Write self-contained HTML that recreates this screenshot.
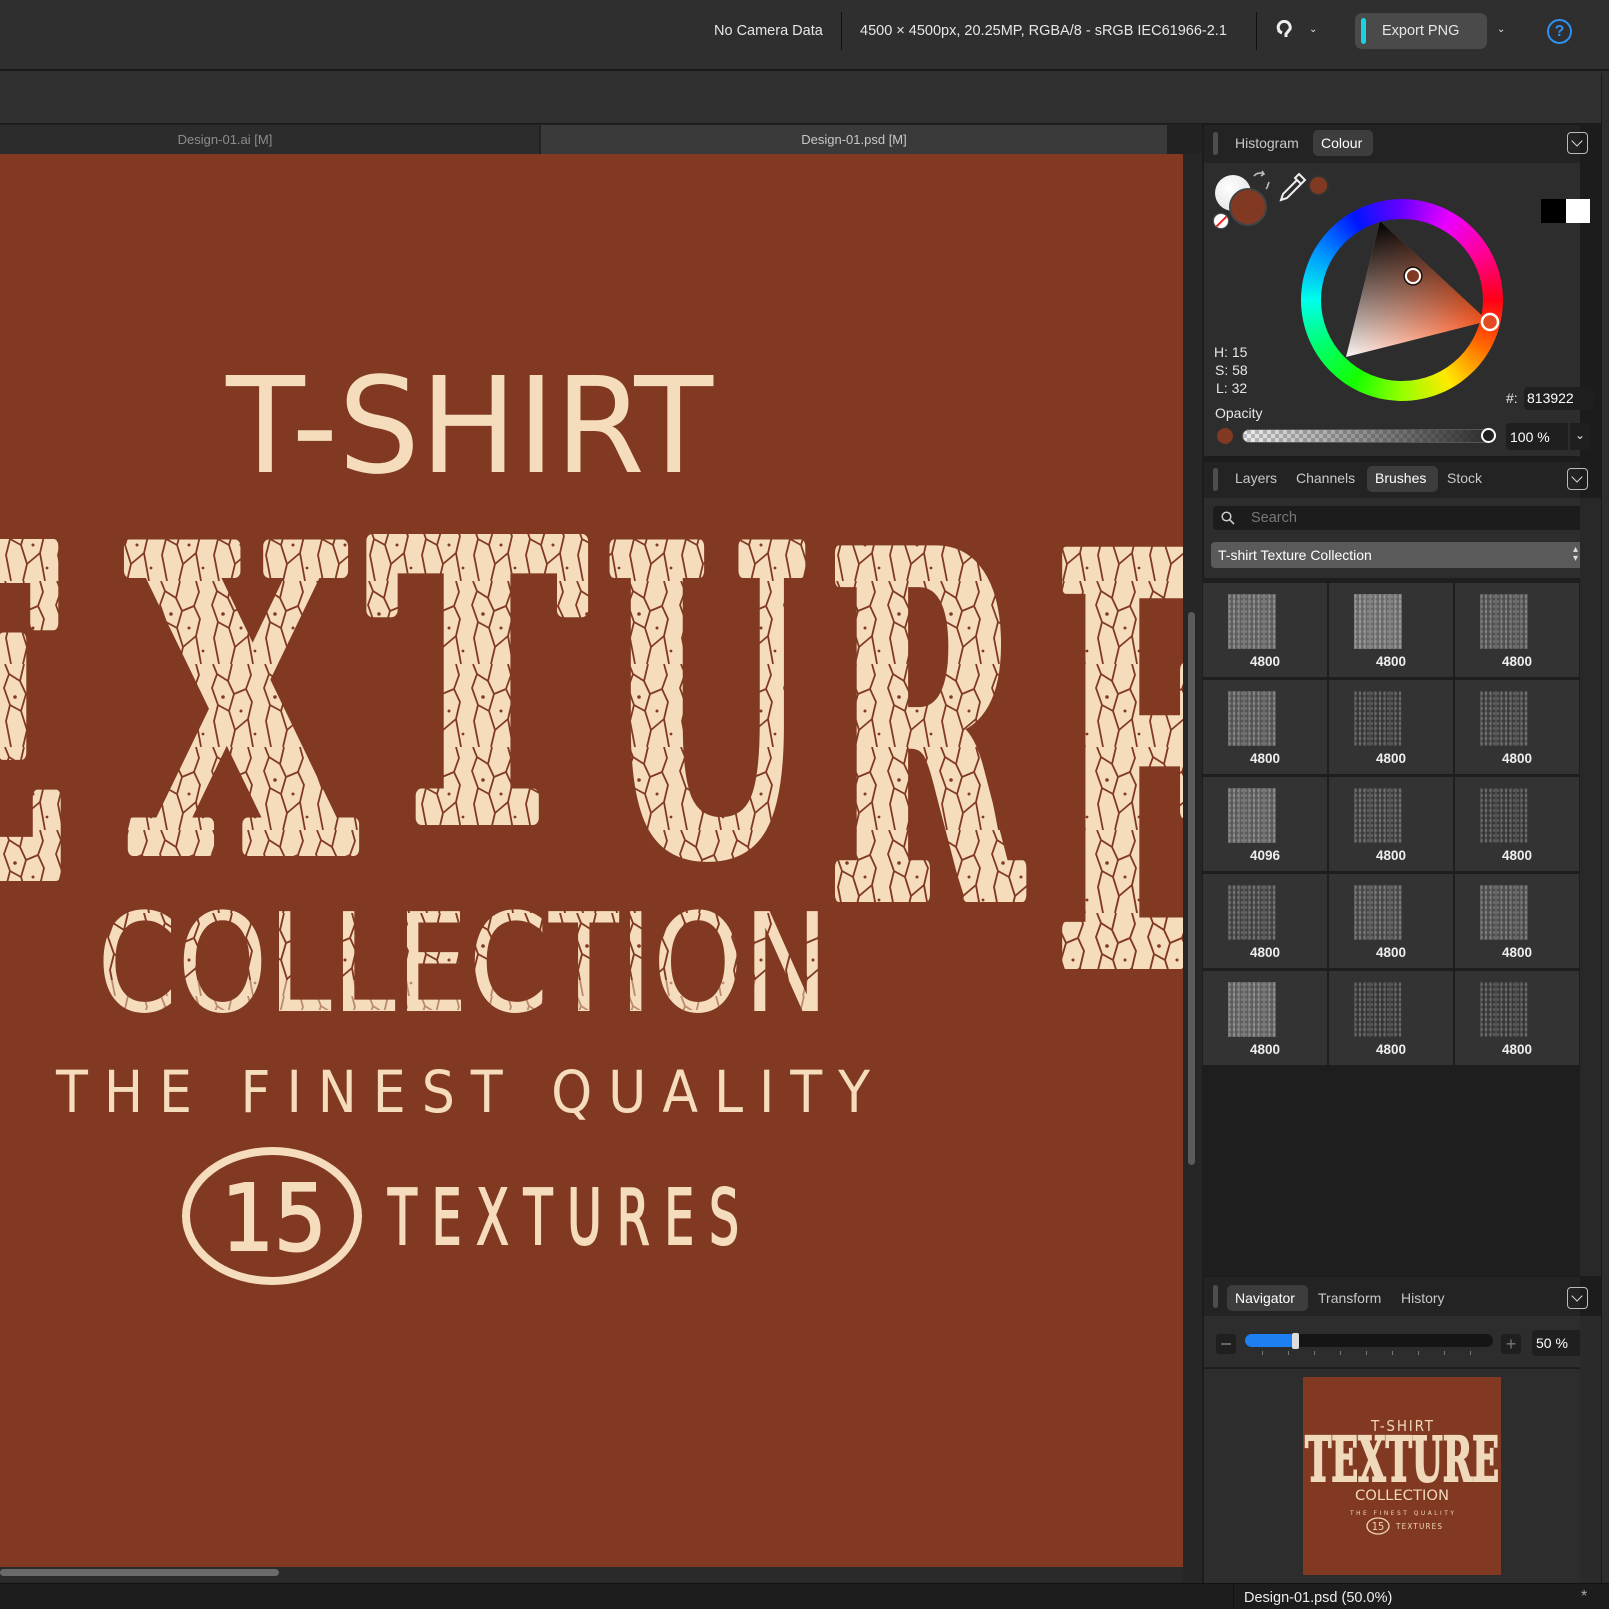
<!DOCTYPE html>
<html><head><meta charset="utf-8"><style>
*{margin:0;padding:0;box-sizing:border-box}
body{width:1609px;height:1609px;overflow:hidden;background:#2f2f2f;font-family:"Liberation Sans",sans-serif;color:#e6e6e6;position:relative}
.a{position:absolute}
.t{position:absolute;white-space:nowrap;font-size:14px;line-height:1}
.dd{position:absolute;width:21px;height:22px;border:1.5px solid #bbb;border-radius:4px}
.dd:after{content:"";position:absolute;left:5px;top:4px;width:7px;height:7px;border-right:1.6px solid #ddd;border-bottom:1.6px solid #ddd;transform:rotate(45deg)}
.grip{position:absolute;width:5px;height:23px;background:#4e4e4e;border-radius:3px}
.cell{position:absolute;width:124px;height:94px;background:#333}
.cell .th{position:absolute;left:25px;top:11px;width:48px;height:55px;background:#6a6a6a;background-image:radial-gradient(rgba(255,255,255,.18) 1px,transparent 1.5px),repeating-linear-gradient(90deg,rgba(255,255,255,.08) 0 2px,rgba(0,0,0,.12) 2px 5px);background-size:4px 5px,auto}
.cell .lb{position:absolute;left:0;width:124px;top:72px;text-align:center;font-size:13.5px;font-weight:bold;color:#eee;line-height:1}
</style></head><body>
<!-- top bar -->
<div class="a" style="left:0;top:0;width:1609px;height:71px;background:#2f2f2f;border-bottom:2px solid #1b1b1b"></div>
<div class="t" style="left:714px;top:24px;font-size:14.5px">No Camera Data</div>
<div class="a" style="left:841px;top:12px;width:1px;height:38px;background:#111"></div>
<div class="t" style="left:860px;top:24px;font-size:14.5px">4500 × 4500px, 20.25MP, RGBA/8 - sRGB IEC61966-2.1</div>
<div class="a" style="left:1256px;top:12px;width:1px;height:38px;background:#111"></div>
<svg class="a" style="left:1274px;top:20px" width="24" height="24" viewBox="0 0 24 24"><path d="M8 13 A6 6 0 1 1 16 9 L12 14 L12 17" fill="none" stroke="#eee" stroke-width="3"/><circle cx="5" cy="11" r="1.5" fill="#eee"/></svg>
<div class="t" style="left:1309px;top:25px;font-size:10px">⌄</div>
<div class="a" style="left:1355px;top:13px;width:132px;height:36px;background:#4a4a4a;border-radius:7px"></div>
<div class="a" style="left:1361px;top:18px;width:5px;height:26px;background:#17d3e6;border-radius:3px"></div>
<div class="t" style="left:1382px;top:24px;font-size:14.5px">Export PNG</div>
<div class="t" style="left:1497px;top:25px;font-size:10px">⌄</div>
<div class="a" style="left:1547px;top:19px;width:25px;height:25px;border:2px solid #2f8ff0;border-radius:50%;color:#2f8ff0;font-size:16px;text-align:center;line-height:21px;font-weight:bold">?</div>
<!-- second bar -->
<div class="a" style="left:0;top:73px;width:1601px;height:51px;background:#303030;border-bottom:1px solid #1a1a1a"></div>
<!-- tabs -->
<div class="a" style="left:0;top:124px;width:1202px;height:30px;background:#222"></div>
<div class="a" style="left:0;top:125px;width:539px;height:29px;background:#2c2c2c"></div>
<div class="t" style="left:0;width:450px;text-align:center;top:133px;font-size:13px;color:#8d8d8d">Design-01.ai [M]</div>
<div class="a" style="left:541px;top:125px;width:626px;height:29px;background:#3a3a3a"></div>
<div class="t" style="left:541px;width:626px;text-align:center;top:133px;font-size:13px;color:#c8c8c8">Design-01.psd [M]</div>
<!-- canvas gutter -->
<div class="a" style="left:1183px;top:154px;width:19px;height:1429px;background:#262626"></div>
<div class="a" style="left:1188px;top:612px;width:7px;height:553px;background:#5b5b5b;border-radius:4px"></div>
<div class="a" style="left:0;top:1567px;width:1183px;height:16px;background:#2a2a2a"></div>
<div class="a" style="left:0;top:1569px;width:279px;height:7px;background:#6a6a6a;border-radius:4px"></div>
<!-- canvas -->
<svg class="a" style="left:0;top:154px" width="1183" height="1413" viewBox="0 154 1183 1413">
<defs>
<pattern id="cr" width="52" height="83" patternUnits="userSpaceOnUse">
<path d="M5 0 L9 10 L4 24 L10 41 L6 57 L11 83 M24 0 L20 17 L26 30 L21 47 L27 66 L23 83 M40 0 L43 11 L38 25 L44 38 L40 55 L45 83 M9 10 L20 17 M26 30 L38 25 M10 41 L21 47 M27 66 L40 55" fill="none" stroke="#813922" stroke-width="1.8"/>
<circle cx="15" cy="33" r="1.8" fill="#813922"/><circle cx="33" cy="47" r="1.5" fill="#813922"/><circle cx="47" cy="70" r="1.4" fill="#813922"/>
</pattern>
</defs>
<rect x="0" y="154" width="1183" height="1413" fill="#813922"/>
<g fill="#f5dcbc" font-family="DejaVu Sans Condensed, DejaVu Sans, sans-serif">
<text x="226" y="472" font-size="133" textLength="487" lengthAdjust="spacingAndGlyphs">T-SHIRT</text>
<text x="97" y="1011" font-size="137" textLength="732" lengthAdjust="spacingAndGlyphs">COLLECTION</text>
<text x="56" y="1112" font-size="58" textLength="814" lengthAdjust="spacing">THE FINEST QUALITY</text>
<text x="388" y="1244" font-size="77" stroke="#f5dcbc" stroke-width="2" textLength="351" lengthAdjust="spacingAndGlyphs">T E X T U R E S</text>
<text x="274" y="1250" font-size="92" stroke="#f5dcbc" stroke-width="2" text-anchor="middle">15</text>
</g>
<ellipse cx="272" cy="1216" rx="86" ry="65" fill="none" stroke="#f5dcbc" stroke-width="8"/>
<g fill="#f5dcbc" stroke="#f5dcbc" stroke-width="14" stroke-linejoin="round" font-family="DejaVu Serif Condensed, DejaVu Serif, serif" font-weight="bold">
<text x="-140" y="874" font-size="450" textLength="210" lengthAdjust="spacingAndGlyphs">E</text>
<text x="128" y="849" font-size="415" textLength="226" lengthAdjust="spacingAndGlyphs">X</text>
<text x="369" y="818" font-size="380" textLength="216" lengthAdjust="spacingAndGlyphs">T</text>
<text x="606" y="849" font-size="415" textLength="200" lengthAdjust="spacingAndGlyphs">U</text>
<text x="828" y="895" font-size="470" textLength="193" lengthAdjust="spacingAndGlyphs">R</text>
<text x="1054" y="962" font-size="560" textLength="190" lengthAdjust="spacingAndGlyphs">E</text>
</g>
<rect x="0" y="530" width="1183" height="450" fill="url(#cr)"/>
<rect x="0" y="880" width="1183" height="130" fill="url(#cr)" opacity=".5"/>
</svg>
<!-- right panel -->
<div class="a" style="left:1202px;top:124px;width:399px;height:1459px;background:#1c1c1c"></div>
<div class="a" style="left:1601px;top:73px;width:8px;height:1510px;background:#2e2e2e;border-left:1px solid #1a1a1a"></div>
<!-- colour header -->
<div class="a" style="left:1204px;top:125px;width:376px;height:38px;background:#232323"></div>
<div class="grip" style="left:1213px;top:132px"></div>
<div class="t" style="left:1235px;top:136px;color:#c8c8c8">Histogram</div>
<div class="a" style="left:1313px;top:130px;width:60px;height:26px;background:#3d3d3d;border-radius:5px"></div>
<div class="t" style="left:1321px;top:136px;color:#fff">Colour</div>
<div class="dd" style="left:1567px;top:132px"></div>
<div class="a" style="left:1204px;top:163px;width:376px;height:293px;background:#2d2d2d"></div>
<!-- colour swatches -->
<div class="a" style="left:1215px;top:175px;width:36px;height:36px;border-radius:50%;background:radial-gradient(circle at 40% 35%,#fff,#ddd)"></div>
<div class="a" style="left:1229px;top:188px;width:38px;height:38px;border-radius:50%;background:#813922;border:2px solid #444"></div>
<div class="a" style="left:1213px;top:213px;width:16px;height:16px;border-radius:50%;background:#fff;border:1px solid #555;overflow:hidden"><div style="position:absolute;left:-2px;top:6px;width:20px;height:2px;background:#e22;transform:rotate(-45deg)"></div></div>
<svg class="a" style="left:1250px;top:170px" width="22" height="22" viewBox="0 0 22 22"><path d="M4 6 A8 8 0 0 1 14 4 M12 1 L14 4 L11 6 M18 14 A8 8 0 0 1 16 19 M19 12 L18 15" fill="none" stroke="#bbb" stroke-width="1.6"/></svg>
<svg class="a" style="left:1277px;top:172px" width="30" height="30" viewBox="0 0 30 30"><path d="M22 2 L28 8 L24 12 L18 6 Z M20 8 L6 22 L4 28 L10 26 L24 12" fill="none" stroke="#eee" stroke-width="2"/></svg>
<div class="a" style="left:1308px;top:175px;width:21px;height:21px;border-radius:50%;background:#813922;border:2px solid #333"></div>
<div class="a" style="left:1541px;top:199px;width:25px;height:24px;background:#000"></div>
<div class="a" style="left:1566px;top:199px;width:24px;height:24px;background:#fff"></div>
<!-- wheel -->
<div class="a" style="left:1301px;top:199px;width:202px;height:202px;border-radius:50%;background:conic-gradient(from 0deg,hsl(265,100%,50%),hsl(295,100%,50%) 30deg,hsl(325,100%,50%) 60deg,hsl(355,100%,50%) 90deg,hsl(25,100%,50%) 120deg,hsl(55,100%,50%) 150deg,hsl(85,100%,50%) 180deg,hsl(115,100%,50%) 210deg,hsl(145,100%,50%) 240deg,hsl(175,100%,50%) 270deg,hsl(205,100%,50%) 300deg,hsl(235,100%,50%) 330deg,hsl(265,100%,50%) 360deg)"></div>
<div class="a" style="left:1321px;top:219px;width:162px;height:162px;border-radius:50%;background:#2d2d2d"></div>
<svg class="a" style="left:1301px;top:199px" width="202" height="202" viewBox="1301 199 202 202">
<defs>
<linearGradient id="g1" x1="1346" y1="357" x2="1488" y2="321" gradientUnits="userSpaceOnUse"><stop offset="0" stop-color="#fff"/><stop offset="1" stop-color="#ea4a14"/></linearGradient>
<linearGradient id="g2" x1="1380" y1="221" x2="1417" y2="339" gradientUnits="userSpaceOnUse"><stop offset="0" stop-color="#000"/><stop offset="1" stop-color="#000" stop-opacity="0"/></linearGradient>
</defs>
<polygon points="1380,221 1488,321 1346,357" fill="url(#g1)"/>
<polygon points="1380,221 1488,321 1346,357" fill="url(#g2)"/>
<circle cx="1413" cy="276" r="7" fill="#813922" stroke="#fff" stroke-width="2"/><circle cx="1413" cy="276" r="9" fill="none" stroke="#000" stroke-width="1"/>
<circle cx="1490" cy="322" r="8" fill="#e44a22" stroke="#fff" stroke-width="2.5"/>
</svg>
<div class="t" style="left:1214px;top:345px">H: 15</div>
<div class="t" style="left:1215px;top:363px">S: 58</div>
<div class="t" style="left:1216px;top:381px">L: 32</div>
<div class="t" style="left:1506px;top:391px">#:</div>
<div class="a" style="left:1524px;top:387px;width:70px;height:23px;background:#1f1f1f;border-radius:4px"></div>
<div class="t" style="left:1527px;top:391px;color:#fff">813922</div>
<div class="t" style="left:1215px;top:406px">Opacity</div>
<div class="a" style="left:1217px;top:428px;width:16px;height:16px;border-radius:50%;background:#813922"></div>
<div class="a" style="left:1242px;top:429px;width:253px;height:14px;border-radius:7px;border:1px solid #555;background:linear-gradient(90deg,rgba(45,45,45,0),#2a2a2a),repeating-conic-gradient(#bbb 0 25%,#eee 0 50%) 0 0/8px 8px"></div>
<div class="a" style="left:1481px;top:428px;width:15px;height:15px;border-radius:50%;border:2.5px solid #fff;background:#1f1f1f"></div>
<div class="a" style="left:1506px;top:423px;width:62px;height:27px;background:#1f1f1f;border-radius:4px 0 0 4px"></div>
<div class="t" style="left:1510px;top:430px;color:#fff">100 %</div>
<div class="a" style="left:1570px;top:423px;width:20px;height:27px;background:#1f1f1f;border-radius:0 4px 4px 0;font-size:12px;text-align:center;line-height:25px">⌄</div>
<!-- brushes header -->
<div class="a" style="left:1204px;top:462px;width:376px;height:36px;background:#232323"></div>
<div class="grip" style="left:1213px;top:468px"></div>
<div class="t" style="left:1235px;top:471px;color:#c8c8c8">Layers</div>
<div class="t" style="left:1296px;top:471px;color:#c8c8c8">Channels</div>
<div class="a" style="left:1367px;top:466px;width:71px;height:26px;background:#3d3d3d;border-radius:5px"></div>
<div class="t" style="left:1375px;top:471px;color:#fff">Brushes</div>
<div class="t" style="left:1447px;top:471px;color:#c8c8c8">Stock</div>
<div class="dd" style="left:1567px;top:468px"></div>
<div class="a" style="left:1204px;top:498px;width:376px;height:80px;background:#2d2d2d"></div>
<div class="a" style="left:1213px;top:506px;width:376px;height:24px;background:#1c1c1c;border-radius:4px"></div>
<svg class="a" style="left:1221px;top:511px" width="14" height="14" viewBox="0 0 14 14"><circle cx="5.5" cy="5.5" r="4.3" fill="none" stroke="#ccc" stroke-width="1.5"/><path d="M8.8 8.8 L13 13" stroke="#ccc" stroke-width="1.6"/></svg>
<div class="t" style="left:1251px;top:511px;color:#777;font-size:14.5px">Search</div>
<div class="a" style="left:1211px;top:542px;width:378px;height:26px;background:#5a5a5a;border-radius:4px"></div>
<div class="t" style="left:1218px;top:548px;color:#fff">T-shirt Texture Collection</div>
<div class="t" style="left:1573px;top:545px;color:#ddd;font-size:10px;line-height:9px">▴<br>▾</div>
<!-- grid -->
<div class="a" style="left:1202px;top:578px;width:378px;height:698px;background:#1e1e1e"></div>
<div class="a" style="left:1580px;top:498px;width:21px;height:778px;background:#282828"></div>
<div class="cell" style="left:1203px;top:583px"><div class="th"></div><div class="lb">4800</div></div>
<div class="cell" style="left:1329px;top:583px"><div class="th" style="background-color:#777"></div><div class="lb">4800</div></div>
<div class="cell" style="left:1455px;top:583px"><div class="th" style="background-color:#5a5a5a"></div><div class="lb">4800</div></div>
<div class="cell" style="left:1203px;top:680px"><div class="th" style="background-color:#5e5e5e"></div><div class="lb">4800</div></div>
<div class="cell" style="left:1329px;top:680px"><div class="th" style="background-color:#3e3e3e"></div><div class="lb">4800</div></div>
<div class="cell" style="left:1455px;top:680px"><div class="th" style="background-color:#444"></div><div class="lb">4800</div></div>
<div class="cell" style="left:1203px;top:777px"><div class="th" style="background-color:#666"></div><div class="lb">4096</div></div>
<div class="cell" style="left:1329px;top:777px"><div class="th" style="background-color:#444"></div><div class="lb">4800</div></div>
<div class="cell" style="left:1455px;top:777px"><div class="th" style="background-color:#3e3e3e"></div><div class="lb">4800</div></div>
<div class="cell" style="left:1203px;top:874px"><div class="th" style="background-color:#4a4a4a"></div><div class="lb">4800</div></div>
<div class="cell" style="left:1329px;top:874px"><div class="th" style="background-color:#505050"></div><div class="lb">4800</div></div>
<div class="cell" style="left:1455px;top:874px"><div class="th" style="background-color:#555"></div><div class="lb">4800</div></div>
<div class="cell" style="left:1203px;top:971px"><div class="th" style="background-color:#6a6a6a"></div><div class="lb">4800</div></div>
<div class="cell" style="left:1329px;top:971px"><div class="th" style="background-color:#3c3c3c"></div><div class="lb">4800</div></div>
<div class="cell" style="left:1455px;top:971px"><div class="th" style="background-color:#3e3e3e"></div><div class="lb">4800</div></div>
<!-- navigator -->
<div class="a" style="left:1204px;top:1277px;width:376px;height:39px;background:#232323"></div>
<div class="grip" style="left:1213px;top:1285px"></div>
<div class="a" style="left:1227px;top:1285px;width:81px;height:26px;background:#3d3d3d;border-radius:5px"></div>
<div class="t" style="left:1235px;top:1291px;color:#fff">Navigator</div>
<div class="t" style="left:1318px;top:1291px;color:#c8c8c8">Transform</div>
<div class="t" style="left:1401px;top:1291px;color:#c8c8c8">History</div>
<div class="dd" style="left:1567px;top:1287px"></div>
<div class="a" style="left:1204px;top:1316px;width:376px;height:52px;background:#2d2d2d;border-bottom:1px solid #1f1f1f"></div>
<div class="a" style="left:1216px;top:1334px;width:20px;height:20px;background:#1f1f1f;border-radius:3px"><div style="position:absolute;left:5px;top:9px;width:10px;height:1.5px;background:#666"></div></div>
<div class="a" style="left:1245px;top:1334px;width:248px;height:13px;background:#151515;border-radius:7px"></div>
<div class="a" style="left:1245px;top:1334px;width:50px;height:13px;background:#1d7ff0;border-radius:7px 0 0 7px"></div>
<div class="a" style="left:1292px;top:1333px;width:7px;height:16px;background:#ddd;border-radius:2px"></div>
<div class="a" style="left:1262px;top:1351px;width:210px;height:4px;background:repeating-linear-gradient(90deg,#777 0 1px,transparent 1px 26px)"></div>
<div class="a" style="left:1501px;top:1334px;width:20px;height:20px;background:#1f1f1f;border-radius:3px;color:#777;font-size:18px;text-align:center;line-height:20px">+</div>
<div class="a" style="left:1532px;top:1330px;width:58px;height:26px;background:#1f1f1f;border-radius:4px"></div>
<div class="t" style="left:1536px;top:1336px;color:#fff">50 %</div>
<div class="a" style="left:1204px;top:1369px;width:376px;height:214px;background:#2d2d2d"></div>
<div class="a" style="left:1580px;top:1316px;width:21px;height:267px;background:#2a2a2a"></div>
<svg class="a" style="left:1303px;top:1377px" width="198" height="198" viewBox="0 0 198 198">
<rect width="198" height="198" fill="#813922"/>
<g fill="#f0d8bb" font-family="DejaVu Sans Condensed, DejaVu Sans, sans-serif" text-anchor="middle">
<text x="99" y="54" font-size="15" textLength="62" lengthAdjust="spacing">T-SHIRT</text>
<text x="99" y="123" font-size="14" textLength="94" lengthAdjust="spacingAndGlyphs">COLLECTION</text>
<text x="99" y="138" font-size="6.5" textLength="104" lengthAdjust="spacing">THE FINEST QUALITY</text>
<text x="116" y="152" font-size="8" textLength="46" lengthAdjust="spacing">TEXTURES</text>
<text x="75" y="153" font-size="11">15</text>
</g>
<ellipse cx="75" cy="149" rx="11" ry="8" fill="none" stroke="#f0d8bb" stroke-width="1.3"/>
<text x="2" y="104" fill="#f0d8bb" stroke="#f0d8bb" stroke-width="2" font-family="DejaVu Serif Condensed, DejaVu Serif, serif" font-weight="bold" font-size="62" textLength="194" lengthAdjust="spacingAndGlyphs">TEXTURE</text>
</svg>
<!-- status bar -->
<div class="a" style="left:0;top:1583px;width:1609px;height:26px;background:#1d1d1d;border-top:1px solid #111"></div>
<div class="a" style="left:1233px;top:1584px;width:1px;height:25px;background:#111"></div>
<div class="t" style="left:1244px;top:1591px;color:#eee;font-size:14.5px">Design-01.psd (50.0%)</div>
<div class="t" style="left:1581px;top:1589px;color:#aaa;font-size:16px">*</div>
</body></html>
